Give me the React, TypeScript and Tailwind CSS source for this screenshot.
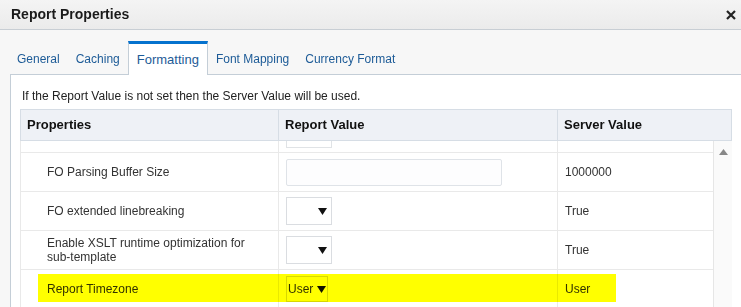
import { ReactNode } from 'react';

const tabs = ['General', 'Caching', 'Formatting', 'Font Mapping', 'Currency Format'];

function Caret() {
  return (
    <svg width="9" height="7" viewBox="0 0 9 7" className="shrink-0">
      <path d="M0 0 H9 L4.5 7 Z" fill="#111" />
    </svg>
  );
}

function SelectBox() {
  return (
    <div className="w-[46px] h-[28px] border border-[#dadde1] bg-white flex items-center justify-end pr-[4px]">
      <Caret />
    </div>
  );
}

interface RowProps {
  label: ReactNode;
  control: ReactNode;
  server: string;
  highlight?: boolean;
}

function Row({ label, control, server, highlight }: RowProps) {
  return (
    <div className="relative grid grid-cols-[258px_279px_156px] h-[39px] border-b border-[#e9e9e9]">
      <div className="flex items-center pl-[26px] pr-[8px] text-[12px] leading-[14px] text-[#333] border-r border-[#e9e9e9]">
        {label}
      </div>
      <div className="flex items-center pl-[7px] border-r border-[#e9e9e9]">{control}</div>
      <div className="flex items-center pl-[7px] text-[12px] text-[#333]">{server}</div>
      {highlight && (
        <div className="absolute left-[17px] top-[4px] w-[578px] h-[28px] bg-[#ffff00] mix-blend-multiply pointer-events-none" />
      )}
    </div>
  );
}

export default function App() {
  return (
    <div className="w-[741px] h-[307px] overflow-hidden bg-[#f7f7f7] font-['Liberation_Sans',Arial,sans-serif]">
      {/* Dialog title bar */}
      <div className="h-[30px] bg-gradient-to-b from-[#f4f4f4] to-[#ebebeb] border-b border-[#c8ced4] flex items-center justify-between pl-[11px] pr-[5px]">
        <span className="text-[14px] font-bold text-[#1a1a1a]">Report Properties</span>
        <svg width="10" height="10" viewBox="0 0 10 10">
          <path d="M1 1 L9 9 M9 1 L1 9" stroke="#222" strokeWidth="2.2" />
        </svg>
      </div>

      {/* Tabs */}
      <div className="flex pl-[9px] pt-[10px] h-[44px] items-end">
        {tabs.map((t) =>
          t === 'Formatting' ? (
            <div
              key={t}
              className="relative z-10 h-[34px] px-[8px] flex items-center bg-white border-x border-[#c4ced7] border-t-[3px] border-t-[#0572ce] text-[13px] text-[#1d5b97] -mb-px"
            >
              <span className="pt-[1px]">{t}</span>
            </div>
          ) : (
            <div key={t} className="h-[34px] px-[8px] flex items-center text-[12px] text-[#1d5b97]">
              <span className="pt-[4px]">{t}</span>
            </div>
          )
        )}
      </div>

      {/* Content panel */}
      <div className="ml-[10px] bg-white border-l border-t border-[#c4ced7] pl-[9px] pt-[14px] h-[300px]">
        <p className="pl-[2px] text-[12px] leading-[14px] text-[#222]">
          If the Report Value is not set then the Server Value will be used.
        </p>

        <div className="mt-[6px] w-[712px]">
          {/* Table header */}
          <div className="grid grid-cols-[258px_279px_175px] h-[32px] bg-[#eef1f6] border border-[#d6dde5] text-[13px] font-bold text-[#111]">
            <div className="flex items-center pl-[6px] border-r border-[#d6dde5]">Properties</div>
            <div className="flex items-center pl-[6px] border-r border-[#d6dde5]">Report Value</div>
            <div className="flex items-center pl-[6px]">Server Value</div>
          </div>

          {/* Body with scrollbar */}
          <div className="flex">
            <div className="w-[693px] border-l border-[#e9e9e9]">
              <div className="grid grid-cols-[258px_279px_156px] h-[12px] border-b border-[#e9e9e9]">
                <div className="border-r border-[#e9e9e9]" />
                <div className="border-r border-[#e9e9e9] pl-[7px]">
                  <div className="w-[46px] h-[7px] border-x border-b border-[#e0e3e6]" />
                </div>
                <div />
              </div>
              <Row
                label="FO Parsing Buffer Size"
                control={<div className="w-[216px] h-[27px] border border-[#dfe3e8] rounded-[2px] bg-[#fdfdfe]" />}
                server="1000000"
              />
              <Row label="FO extended linebreaking" control={<SelectBox />} server="True" />
              <Row
                label={<span>Enable XSLT runtime optimization for sub-template</span>}
                control={<SelectBox />}
                server="True"
              />
              <Row
                label="Report Timezone"
                control={
                  <div className="w-[42px] h-[26px] border border-[#d8d8c4] flex items-center gap-[4px] pl-[1px] text-[12px] text-[#333]">
                    <span>User</span>
                    <Caret />
                  </div>
                }
                server="User"
                highlight
              />
            </div>
            <div className="w-[19px] h-[200px] bg-[#fafafa] border-l border-[#e6e6e6] flex justify-center pt-[8px]">
              <svg width="9" height="6" viewBox="0 0 9 6">
                <path d="M0 6 L4.5 0 L9 6 Z" fill="#888" />
              </svg>
            </div>
          </div>
        </div>
      </div>
    </div>
  );
}
